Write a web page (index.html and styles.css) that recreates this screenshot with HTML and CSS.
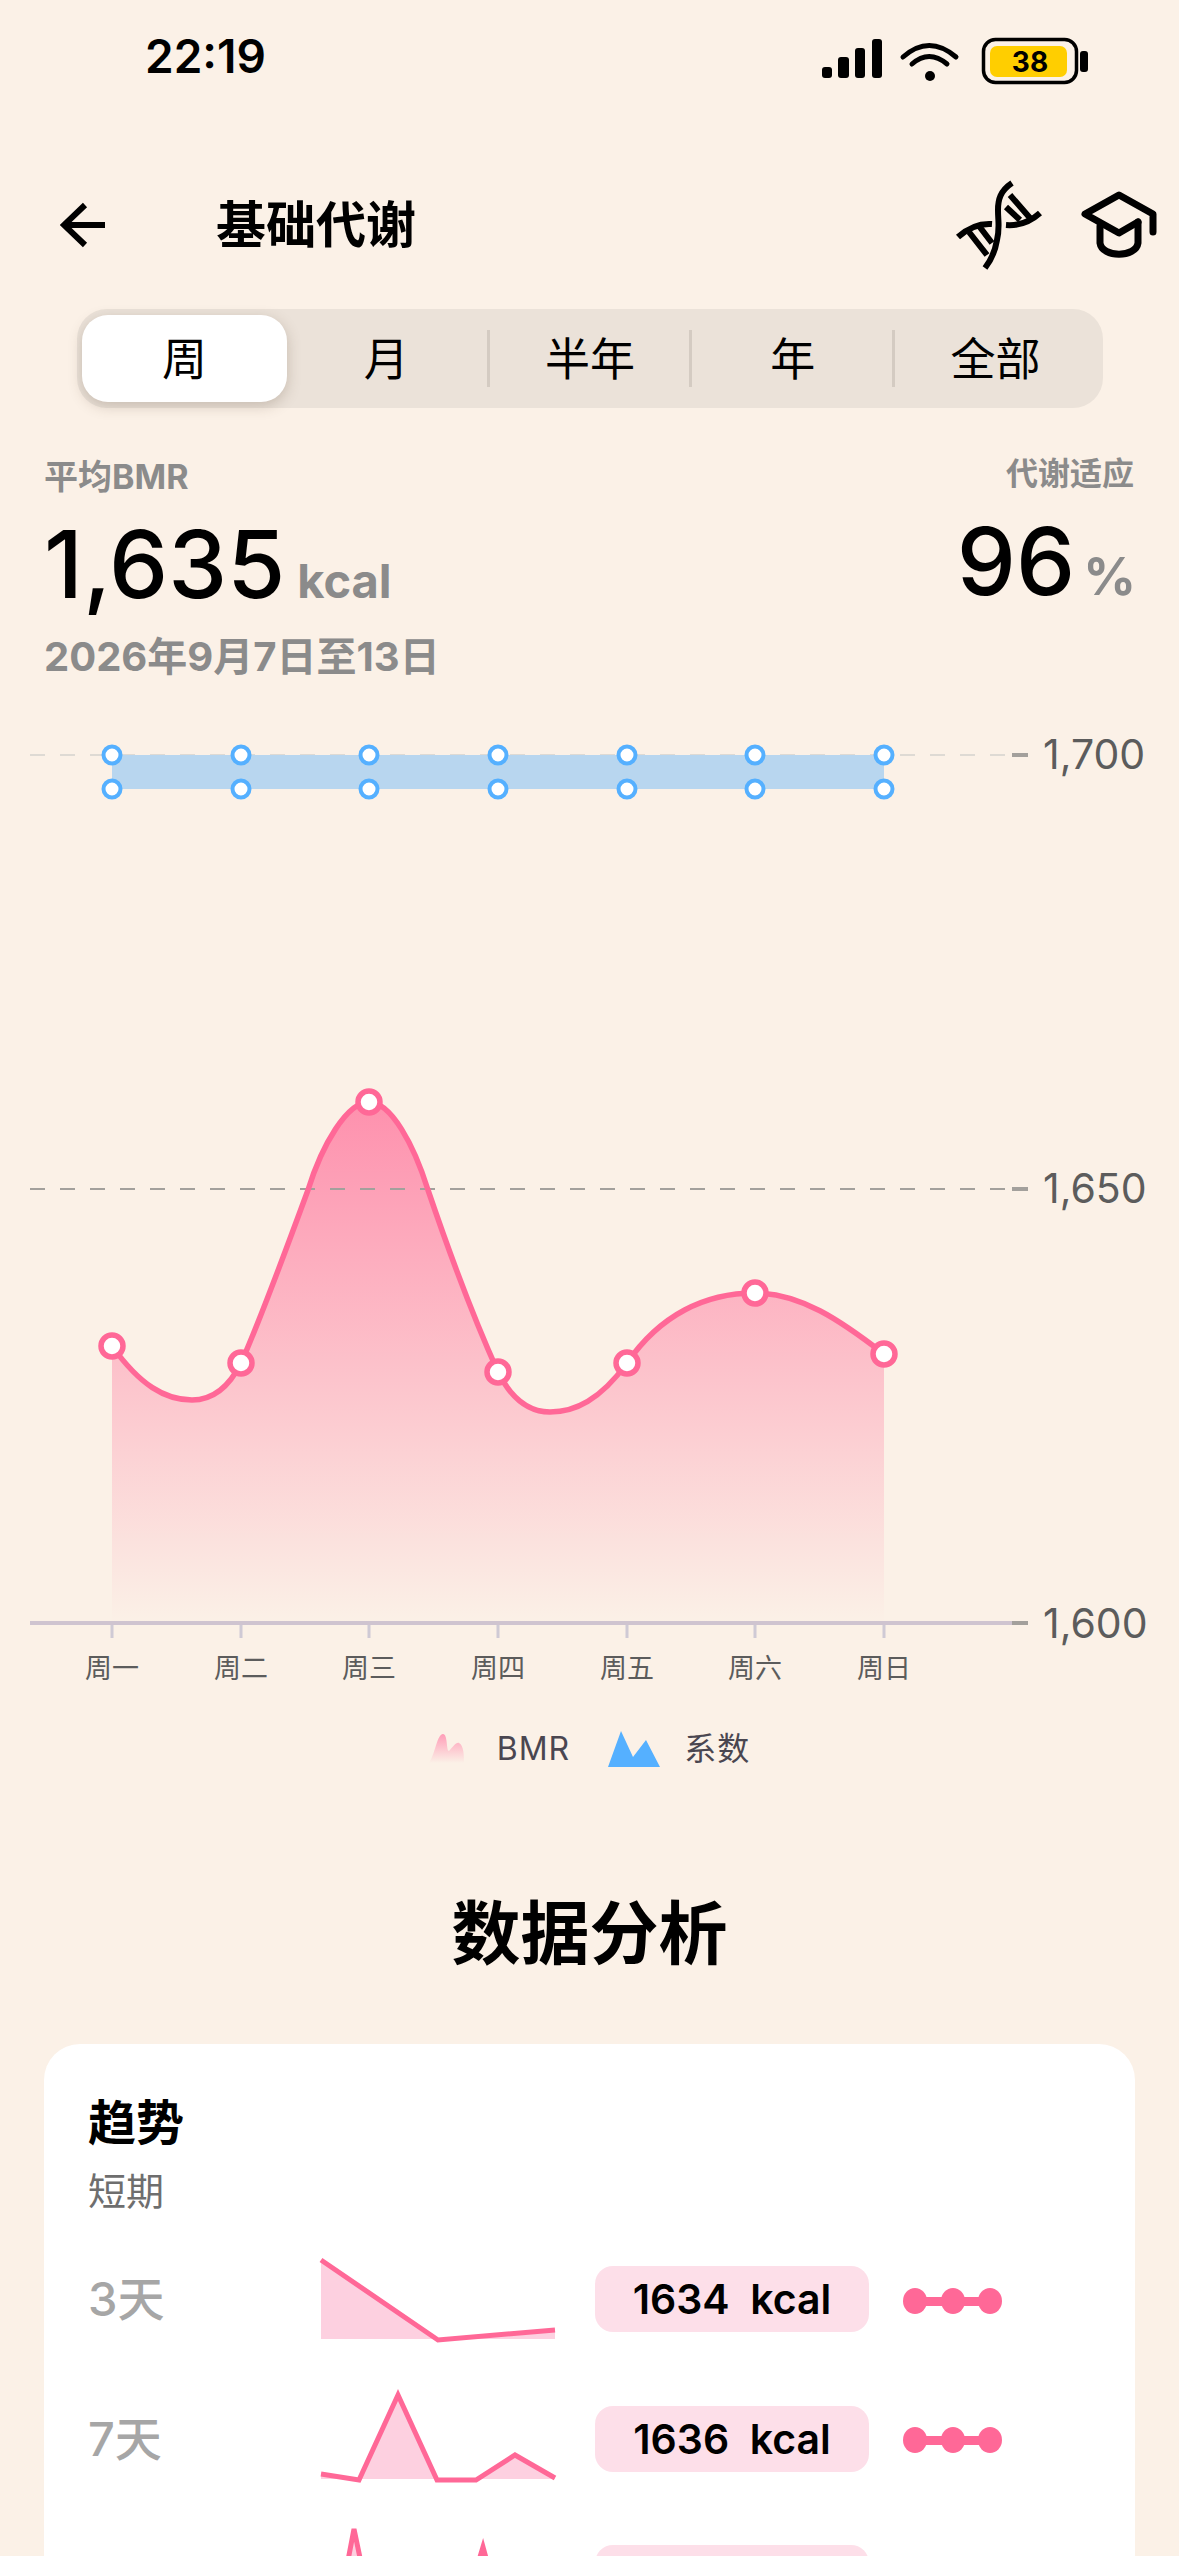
FILE: index.html
```html
<!DOCTYPE html>
<html lang="zh-CN">
  <head>
    <meta charset="UTF-8" />
    <meta name="viewport" content="width=device-width, initial-scale=1.0" />
    <title>基础代谢</title>
    <link rel="stylesheet" href="styles.css">
  </head>
  <body>
    <div class="page">
      <!-- Status bar -->
      <div class="status-bar">
        <span class="time">22:19</span>
        <svg class="status-icons" width="340" height="80" viewBox="0 0 340 80">
          <rect x="42" y="47" width="10" height="11" rx="3" />
          <rect x="58" y="37" width="11" height="21" rx="3" />
          <rect x="75" y="28" width="10" height="30" rx="3" />
          <rect x="92" y="19" width="10" height="39" rx="3" />
          <path d="M123 37 Q149 14 176 37 M132 44 Q149 29 167 44" fill="none" stroke="#000" stroke-width="5" stroke-linecap="round" />
          <circle cx="150" cy="56" r="5" />
          <rect x="203.500" y="19.500" width="93" height="43" rx="12" fill="none" stroke="#000" stroke-width="3.500" />
          <rect x="210" y="26" width="77" height="31" rx="7" fill="#ffce00" />
          <rect x="300" y="31" width="8" height="21" rx="3" />
          <text class="battery-text" x="250" y="52" text-anchor="middle">38</text>
        </svg>
      </div>

      <!-- Header -->
      <div class="header">
        <svg class="back-icon" width="50" height="50" viewBox="60 200 50 50">
          <path d="M105 225 H65 M85 205 L64 225 L85 245" fill="none" stroke="#000" stroke-width="6" />
        </svg>
        <h1 class="title">基础代谢</h1>
        <svg class="header-icons" width="240" height="120" viewBox="0 0 240 120">
          <g fill="none" stroke="#000" stroke-width="6">
            <path d="M92 23 C80 31 78 40 78 50 C78 62 80 68 77 80 C75 92 72 99 65 108" />
            <path d="M38 77 C48 68 58 63 72 64 M86 65 C100 66 110 62 120 53" />
            <path d="M49 72 L67 95 M59 66 L72 83 M90 35 L110 58 M86 47 L100 60" />
          </g>
          <g fill="none" stroke="#000" stroke-width="7" stroke-linecap="round" stroke-linejoin="round">
            <path d="M218 62 L199 73 L165 54 L199 35 L233 54 V72" />
            <path d="M180 66 V83 C182 98 216 98 218 83 V62" />
          </g>
        </svg>
      </div>

      <!-- Range tabs -->
      <div class="tabs">
        <div class="tab tab-active">周</div>
        <div class="tab">月</div>
        <div class="tab tab-sep">半年</div>
        <div class="tab tab-sep">年</div>
        <div class="tab tab-sep">全部</div>
      </div>

      <!-- Summary -->
      <div class="summary">
        <div>
          <div class="label">平均BMR</div>
          <div class="value">1,635<span class="unit unit-kcal">kcal</span></div>
          <div class="date">2026年9月7日至13日</div>
        </div>
        <div class="summary-right">
          <div class="label">代谢适应</div>
          <div class="value">96<span class="unit unit-pct">%</span></div>
        </div>
      </div>

      <!-- Chart, drawn in page coordinates -->
      <svg class="chart" width="1179" height="980" viewBox="0 715 1179 980">
        <defs>
          <linearGradient id="areaFill" gradientUnits="userSpaceOnUse" x1="0" y1="1102" x2="0" y2="1624">
            <stop offset="0" stop-color="#ff6b97" stop-opacity="0.72" />
            <stop offset="1" stop-color="#ff6b97" stop-opacity="0" />
          </linearGradient>
        </defs>

        <line class="grid-light" x1="30" y1="755" x2="1015" y2="755" />
        <line class="grid-end" x1="1012" y1="755" x2="1028" y2="755" />
        <rect x="112" y="755" width="772" height="34" fill="#b8d6ef" />

        <path d="M112 1346 C140 1385 165 1400 192 1400 C215 1400 230 1385 241 1363 C255 1332 290 1239 308 1190 C322 1145 347 1102 369 1102 C391 1102 414 1145 428 1190 C445 1240 470 1310 498 1372 C512 1400 530 1412 550 1412 C575 1412 600 1400 627 1363 C660 1315 705 1293 755 1293 C800 1293 840 1320 884 1354 V1624 H112 Z" fill="url(#areaFill)" />
        <line class="grid-mid" x1="30" y1="1189" x2="1015" y2="1189" />
        <line class="grid-end" x1="1012" y1="1189" x2="1028" y2="1189" />
        <path class="bmr-line" d="M112 1346 C140 1385 165 1400 192 1400 C215 1400 230 1385 241 1363 C255 1332 290 1239 308 1190 C322 1145 347 1102 369 1102 C391 1102 414 1145 428 1190 C445 1240 470 1310 498 1372 C512 1400 530 1412 550 1412 C575 1412 600 1400 627 1363 C660 1315 705 1293 755 1293 C800 1293 840 1320 884 1354" />

        <g class="dot-blue">
          <circle cx="112" cy="755" r="8.500" /><circle cx="241" cy="755" r="8.500" /><circle cx="369" cy="755" r="8.500" /><circle cx="498" cy="755" r="8.500" /><circle cx="627" cy="755" r="8.500" /><circle cx="755" cy="755" r="8.500" /><circle cx="884" cy="755" r="8.500" />
          <circle cx="112" cy="789" r="8.500" /><circle cx="241" cy="789" r="8.500" /><circle cx="369" cy="789" r="8.500" /><circle cx="498" cy="789" r="8.500" /><circle cx="627" cy="789" r="8.500" /><circle cx="755" cy="789" r="8.500" /><circle cx="884" cy="789" r="8.500" />
        </g>
        <g class="dot-pink">
          <circle cx="112" cy="1346" r="11" /><circle cx="241" cy="1363" r="11" /><circle cx="369" cy="1102" r="11" /><circle cx="498" cy="1372" r="11" /><circle cx="627" cy="1363" r="11" /><circle cx="755" cy="1293" r="11" /><circle cx="884" cy="1354" r="11" />
        </g>

        <line class="axis" x1="30" y1="1623" x2="1015" y2="1623" />
        <line class="grid-end" x1="1012" y1="1623" x2="1028" y2="1623" />
        <path class="ticks" d="M112 1625 V1638 M241 1625 V1638 M369 1625 V1638 M498 1625 V1638 M627 1625 V1638 M755 1625 V1638 M884 1625 V1638" />

        <text class="y-label" x="1043" y="769">1,700</text>
        <text class="y-label" x="1043" y="1203">1,650</text>
        <text class="y-label" x="1043" y="1638">1,600</text>

        <g class="x-label">
          <text x="112" y="1678">周一</text>
          <text x="241" y="1678">周二</text>
          <text x="369" y="1678">周三</text>
          <text x="498" y="1678">周四</text>
          <text x="627" y="1678">周五</text>
          <text x="755" y="1678">周六</text>
          <text x="884" y="1678">周日</text>
        </g>
      </svg>

      <!-- Legend -->
      <div class="legend">
        <svg width="36" height="32" viewBox="0 0 36 32">
          <defs>
            <linearGradient id="legendFill" x1="0" y1="0" x2="0" y2="1">
              <stop offset="0" stop-color="#ff9db8" />
              <stop offset="1" stop-color="#ff9db8" stop-opacity="0" />
            </linearGradient>
          </defs>
          <path d="M0 30 C6 22 8 1 14 1 C19 1 17 18 20 18 C24 14 27 9 30 10 C35 12 35 24 35 30 Z" fill="url(#legendFill)" />
        </svg>
        <span class="legend-text legend-bmr">BMR</span>
        <svg width="52" height="36" viewBox="0 0 52 36">
          <path d="M0 36 L13 0 L25 26 L38 9 L52 36 Z" fill="#55b0ff" />
        </svg>
        <span class="legend-text legend-coef">系数</span>
      </div>

      <h2 class="section-title">数据分析</h2>

      <!-- Trend card -->
      <div class="card">
        <div class="card-title">趋势</div>
        <div class="card-sub">短期</div>

        <div class="trend-row">
          <span class="trend-label">3天</span>
          <svg class="spark" width="234" height="90" viewBox="0 0 234 90">
            <path class="spark-fill" d="M0 5 L117 85 L234 75 V84 H0 Z" />
            <path class="spark-line" d="M0 5 L117 85 L234 75" />
          </svg>
          <div class="pill">1634&nbsp; kcal</div>
          <svg class="trend-dots" width="100" height="26" viewBox="0 0 100 26">
            <rect x="10" y="9" width="80" height="9" />
            <ellipse cx="12" cy="13" rx="12" ry="13" /><ellipse cx="50" cy="13" rx="12" ry="13" /><ellipse cx="87" cy="13" rx="12" ry="13" />
          </svg>
        </div>

        <div class="trend-row">
          <span class="trend-label">7天</span>
          <svg class="spark" width="234" height="90" viewBox="0 0 234 90">
            <path class="spark-fill" d="M0 80 L38 86 L77 1 L116 86 L155 86 L194 61 L234 84 V85 H0 Z" />
            <path class="spark-line" d="M0 80 L38 86 L77 1 L116 86 L155 86 L194 61 L234 84" />
          </svg>
          <div class="pill">1636&nbsp; kcal</div>
          <svg class="trend-dots" width="100" height="26" viewBox="0 0 100 26">
            <rect x="10" y="9" width="80" height="9" />
            <ellipse cx="12" cy="13" rx="12" ry="13" /><ellipse cx="50" cy="13" rx="12" ry="13" /><ellipse cx="87" cy="13" rx="12" ry="13" />
          </svg>
        </div>

        <!-- Third row is cut off by the bottom of the screen -->
        <div class="trend-row">
          <span class="trend-label"></span>
          <svg class="spark" width="234" height="90" viewBox="0 0 234 90">
            <path class="spark-fill" d="M0 84 L16 84 L33 -5 L52 86 L140 86 L162 13 L182 86 L234 84 V85 H0 Z" />
            <path class="spark-line" d="M0 84 L16 84 L33 -5 L52 86 L140 86 L162 13 L182 86 L234 84" />
          </svg>
          <div class="pill"></div>
        </div>
      </div>
    </div>
  </body>
</html>
```

FILE: styles.css
```css
body {
  margin: 0;
  font-family: Inter, "Noto Sans CJK SC", sans-serif;
  color: #000000;
}

.page {
  width: 1179px;
  height: 2556px;
  overflow: hidden;
  background: #fbf1e7;
}

/* Status bar */
.status-bar {
  display: flex;
  justify-content: space-between;
  height: 92px;
  padding: 20px 59px 0 145px;
}

.time {
  font-size: 46px;
  font-weight: 600;
  line-height: 72px;
}

.status-icons {
  display: block;
}

.battery-text {
  font-size: 28px;
  font-weight: 700;
}

/* Header */
.header {
  display: flex;
  align-items: center;
  height: 120px;
  margin-top: 53px;
  padding: 0 19px 0 60px;
}

.title {
  margin: 0 0 0 106px;
  font-size: 50px;
  font-weight: 700;
  line-height: 60px;
}

.header-icons {
  margin: -10px 0 0 auto;
}

/* Range tabs */
.tabs {
  display: grid;
  grid-template-columns: repeat(5, 1fr);
  align-items: center;
  width: 1014px;
  height: 87px;
  margin: 24px 0 0 77px;
  padding: 6px 7px 6px 5px;
  background: #ebe2d9;
  border-radius: 30px;
}

.tab {
  height: 57px;
  font-size: 45px;
  line-height: 59px;
  text-align: center;
}

.tab-active {
  height: 87px;
  line-height: 89px;
  margin-right: -2px;
  background: #ffffff;
  border-radius: 26px;
  box-shadow: 0 4px 14px rgba(90, 70, 50, 0.25);
}

.tab-sep {
  border-left: 3px solid #d4cbc2;
  margin-left: -1px;
}

/* Summary */
.summary {
  display: flex;
  justify-content: space-between;
  margin-top: 49px;
  padding: 0 43px 0 44px;
}

.summary-right {
  text-align: right;
  margin-top: -3px;
}

.label {
  font-size: 34px;
  font-weight: 700;
  line-height: 40px;
  color: #8b8b8b;
}

.summary-right .label {
  font-size: 32px;
  padding-right: 2px;
}

.value {
  margin-top: 17px;
  font-size: 94px;
  font-weight: 500;
  line-height: 100px;
}

.unit {
  font-weight: 700;
  color: #8b8b8b;
}

.unit-kcal {
  margin-left: 12px;
  font-size: 47px;
}

.unit-pct {
  margin-left: 8px;
  font-size: 52px;
}

.date {
  margin-top: 2px;
  font-size: 40px;
  font-weight: 700;
  line-height: 48px;
  color: #8b8b8b;
}

/* Chart */
.chart {
  display: block;
  margin-top: 34px;
}

.grid-light {
  stroke: #dedad4;
  stroke-width: 2;
  stroke-dasharray: 15 15;
}

.grid-mid {
  stroke: #a3a09c;
  stroke-width: 2;
  stroke-dasharray: 15 15;
}

.grid-end {
  stroke: #a3a09c;
  stroke-width: 4;
}

.axis {
  stroke: #cfc4d0;
  stroke-width: 4;
}

.ticks {
  stroke: #cfcad5;
  stroke-width: 3;
  fill: none;
}

.bmr-line {
  fill: none;
  stroke: #ff6897;
  stroke-width: 5.5;
}

.dot-blue circle {
  fill: #ffffff;
  stroke: #55b0ff;
  stroke-width: 4;
}

.dot-pink circle {
  fill: #ffffff;
  stroke: #ff6897;
  stroke-width: 5.5;
}

.y-label {
  font-size: 41px;
  fill: #5c5c5c;
}

.x-label text {
  font-size: 27px;
  fill: #5c5c5c;
  text-anchor: middle;
}

/* Legend */
.legend {
  display: flex;
  justify-content: center;
  align-items: center;
  height: 40px;
  margin-top: 34px;
}

.legend-text {
  font-size: 32px;
  line-height: 40px;
  color: #4a4650;
  letter-spacing: 1px;
}

.legend-bmr {
  margin: 0 38px 0 32px;
}

.legend-coef {
  margin-left: 24px;
}

.section-title {
  margin: 123px 0 0;
  font-size: 69px;
  font-weight: 700;
  line-height: 84px;
  text-align: center;
}

/* Trend card */
.card {
  margin: 68px 44px 0;
  padding: 47px 44px 0;
  background: #ffffff;
  border-radius: 36px;
}

.card-title {
  font-size: 48px;
  font-weight: 700;
  line-height: 64px;
}

.card-sub {
  margin-top: 11px;
  font-size: 38px;
  line-height: 50px;
  color: #6e6e6e;
}

.trend-row {
  display: flex;
  align-items: center;
  height: 139.5px;
  margin-top: 13px;
}

.trend-row + .trend-row {
  margin-top: 0;
}

.trend-label {
  width: 233px;
  padding-bottom: 6px;
  font-size: 47px;
  font-weight: 500;
  color: #a6a6a6;
}

.spark {
  display: block;
  margin-top: 2px;
  overflow: visible;
}

.spark-fill {
  fill: #fdd0e0;
}

.spark-line {
  fill: none;
  stroke: #ff6897;
  stroke-width: 5;
}

.pill {
  width: 274px;
  height: 66px;
  margin: 1px 34px 0 40px;
  background: #fddfe9;
  border-radius: 18px;
  font-size: 41px;
  font-weight: 600;
  line-height: 66px;
  text-align: center;
}

.trend-dots {
  margin-top: 4px;
  fill: #ff6897;
}
```
